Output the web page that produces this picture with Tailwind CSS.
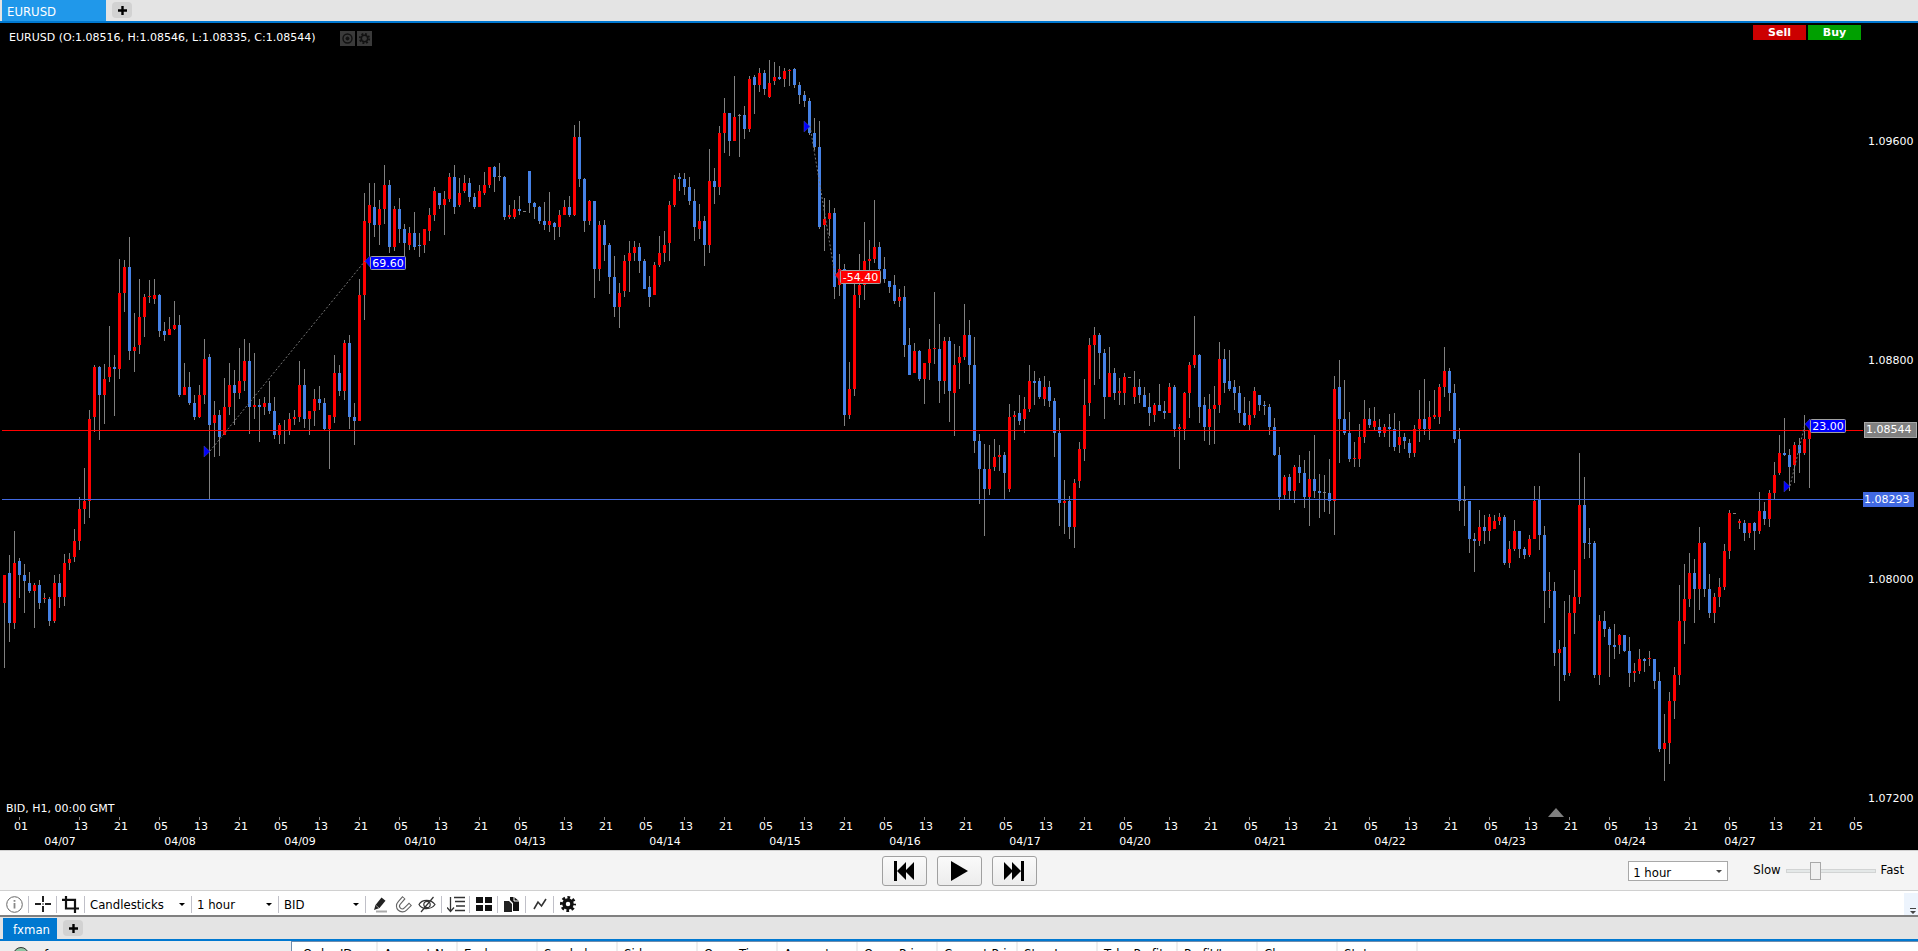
<!DOCTYPE html>
<html lang="en">
<head>
  <meta charset="UTF-8">
  <title>EURUSD</title>
  <script src="https://cdn.jsdelivr.net/npm/@tailwindcss/browser@4"></script>
</head>
<body class="h-screen flex flex-col overflow-hidden bg-white text-black text-[13px] leading-4 font-['DejaVu_Sans_Condensed','DejaVu_Sans',sans-serif]">

  <!-- Chart tabs -->
  <nav class="flex items-start h-[23px] shrink-0 pl-[2px] bg-[#e4e4e4] border-b-2 border-[#0078d0]">
    <a href="#" class="w-[104px] h-[21px] pl-[5px] pt-1 bg-[#2098ea] text-white">EURUSD</a>
    <button aria-label="New chart" class="ml-[6px] mt-[2px] w-5 h-4 rounded bg-[#d2d2d2] flex items-center justify-center">
      <svg width="9" height="9"><path d="M4.500 0v9M0 4.500h9" stroke="#000" stroke-width="2.400"/></svg>
    </button>
  </nav>

  <!-- Chart -->
  <main class="relative flex flex-1 min-h-0 bg-black text-white text-[11px] font-['DejaVu_Sans',sans-serif]">
    <svg id="plot" class="flex-1 min-w-0 h-full"></svg>
    <svg id="scale" class="w-[55px] h-full"></svg>

    <div class="absolute left-[9px] top-[7px] flex items-center">
      <span>EURUSD (O:1.08516, H:1.08546, L:1.08335, C:1.08544)</span>
      <button aria-label="Show" class="ml-6 w-[15px] h-[15px] bg-[#3a3a3a]">
        <svg width="15" height="15" fill="none" stroke="#111"><circle cx="7.500" cy="7.500" r="4.500" stroke-width="1.400"/><circle cx="7.500" cy="7.500" r="1.500" fill="#111"/></svg>
      </button>
      <button aria-label="Settings" class="ml-[2px] w-[15px] h-[15px] bg-[#3a3a3a]">
        <svg width="15" height="15" fill="none" stroke="#111"><circle cx="7.500" cy="7.500" r="3.200" stroke-width="1.500"/><circle cx="7.500" cy="7.500" r="4.700" stroke-width="1.800" stroke-dasharray="1.900 1.790"/></svg>
      </button>
    </div>

    <div class="absolute right-[57px] top-[2px] flex gap-[2px] font-bold">
      <button class="w-[53px] h-[15px] leading-[14px] bg-[#cc0000]">Sell</button>
      <button class="w-[53px] h-[15px] leading-[14px] bg-[#00a000]">Buy</button>
    </div>
  </main>

  <!-- Playback -->
  <section class="flex items-center h-[41px] shrink-0 bg-[#f4f4f4] border-y border-[#d0d0d0] px-[14px]">
    <div class="flex-1"></div>
    <div class="flex gap-[10px]">
      <button aria-label="Back" class="w-[45px] h-[30px] rounded-[3px] border border-[#a0a0a0] bg-linear-to-b from-[#fafafa] to-[#ececec] flex items-center justify-center">
        <svg width="20" height="20"><path d="M0 0h3v20H0zM12 1v18L3 10zM20 1v18L11 10z"/></svg>
      </button>
      <button aria-label="Play" class="w-[45px] h-[30px] rounded-[3px] border border-[#a0a0a0] bg-linear-to-b from-[#fafafa] to-[#ececec] flex items-center justify-center">
        <svg width="17" height="20"><path d="M0 0v20L17 10z"/></svg>
      </button>
      <button aria-label="Forward" class="w-[45px] h-[30px] rounded-[3px] border border-[#a0a0a0] bg-linear-to-b from-[#fafafa] to-[#ececec] flex items-center justify-center">
        <svg width="20" height="20"><path d="M17 0h3v20h-3zM8 1v18l9-9zM0 1v18l9-9z"/></svg>
      </button>
    </div>
    <div class="flex-1 flex items-center justify-end">
      <div class="relative mr-[25px]">
        <select aria-label="Step" class="appearance-none block w-[100px] h-5 pl-1 pt-[3px] border border-[#a8a8a8] bg-white">
          <option>1 hour</option>
        </select>
        <svg class="absolute right-[6px] top-[9px]" width="6" height="3"><path d="M0 0h6L3 3z" fill="#444"/></svg>
      </div>
      <label for="speed" class="-mt-[2px]">Slow</label>
      <input id="speed" type="range" min="0" max="100" value="31" class="appearance-none w-[90px] h-[4px] mx-[5px] bg-[#e4e8e8] border border-[#d2d4d4] [&::-webkit-slider-thumb]:appearance-none [&::-webkit-slider-thumb]:w-[11px] [&::-webkit-slider-thumb]:h-[18px] [&::-webkit-slider-thumb]:bg-[#f0f0f0] [&::-webkit-slider-thumb]:border [&::-webkit-slider-thumb]:border-[#a8a8a8]">
      <label for="speed" class="-mt-[2px]">Fast</label>
    </div>
  </section>

  <!-- Toolbar -->
  <section class="flex items-center h-[26px] shrink-0 pl-px pt-[2px] bg-white border-b-2 border-[#808080]">
    <button aria-label="Info" class="w-7 h-[17px] border-r border-[#c0c0c8] flex items-center justify-center">
      <svg width="17" height="17" fill="none" stroke="#666"><circle cx="8.500" cy="8.500" r="7.800"/><path d="M8.500 7v5.500M8.500 4v1.800" stroke-width="1.800" stroke="#888"/></svg>
    </button>
    <button aria-label="Crosshair" class="w-7 h-[17px] border-r border-[#c0c0c8] flex items-center justify-center">
      <svg width="16" height="16" stroke="#222" stroke-width="2"><path d="M8 0v6M8 10v6M0 8h6M10 8h6"/><path d="M8 7v2" stroke="#999"/></svg>
    </button>
    <button aria-label="Crop" class="w-7 h-[17px] border-r border-[#c0c0c8] flex items-center justify-center">
      <svg width="17" height="17" fill="none" stroke="#111" stroke-width="2.200"><path d="M4 0v12.500h13M0 3.800h13V17"/></svg>
    </button>
    <div class="relative border-r border-[#c0c0c8]">
      <select aria-label="Chart type" class="appearance-none block w-[106px] h-[17px] pl-[5px] leading-[17px]"><option>Candlesticks</option></select>
      <svg class="absolute right-[6px] top-[7px]" width="6" height="3"><path d="M0 0h6L3 3z"/></svg>
    </div>
    <div class="relative border-r border-[#c0c0c8]">
      <select aria-label="Period" class="appearance-none block w-[86px] h-[17px] pl-[5px] leading-[17px]"><option>1 hour</option></select>
      <svg class="absolute right-[6px] top-[7px]" width="6" height="3"><path d="M0 0h6L3 3z"/></svg>
    </div>
    <div class="relative border-r border-[#c0c0c8]">
      <select aria-label="Price side" class="appearance-none block w-[86px] h-[17px] pl-[5px] leading-[17px]"><option>BID</option></select>
      <svg class="absolute right-[6px] top-[7px]" width="6" height="3"><path d="M0 0h6L3 3z"/></svg>
    </div>
    <div class="flex w-[76px] h-[17px] pl-[6px] gap-[6px] items-center border-r border-[#c0c0c8]">
      <button aria-label="Draw"><svg width="17" height="17"><path d="M2 14l1.500-5L9.500 1.500l4 3.300L7.500 12z" fill="#222"/><path d="M4 9.500l3 2.500" stroke="#999"/><path d="M4 15.500h11" stroke="#aaa" stroke-width="2"/></svg></button>
      <button aria-label="Magnet"><svg width="17" height="17" fill="none"><path d="M9 1.500L4.200 7A4.300 4.300 0 0 0 10.500 13L15.500 8" stroke="#666" stroke-width="4.200"/><path d="M8.400 2.200L4.200 7A4.300 4.300 0 0 0 10.500 13L14.800 8.700" stroke="#fff" stroke-width="2"/></svg></button>
      <button aria-label="Hide"><svg width="18" height="17" fill="none" stroke="#333" stroke-width="1.200"><path d="M1 8.500C4 3 13 3 17 8.500 13 14 4 14 1 8.500zM15.500 1L3 16"/><circle cx="9" cy="8.500" r="3.200"/></svg></button>
    </div>
    <button aria-label="Sort" class="w-7 h-[17px] border-r border-[#c0c0c8] flex items-center justify-center">
      <svg width="18" height="17" fill="none" stroke="#333" stroke-width="1.300"><path d="M3.500 1v14M0 11.500l3.500 4 3.500-4M7 1.500h11M8 5.500h10M9 10h9M8 14.500h10"/></svg>
    </button>
    <button aria-label="Tile" class="w-7 h-[17px] border-r border-[#c0c0c8] flex items-center justify-center">
      <svg width="16" height="16"><path d="M0 1h7v6H0zM9 1h7v6H9zM0 9h7v6H0zM9 9h7v6H9z" fill="#111"/></svg>
    </button>
    <button aria-label="Copy" class="w-7 h-[17px] border-r border-[#c0c0c8] flex items-center justify-center">
      <svg width="15" height="17"><path d="M0 5h5l3 3v8H0z" fill="#222"/><path d="M6 1h4l5 4v10h-6V7L6 4z" fill="#111"/><path d="M10 1v4h5" stroke="#fff" fill="none"/></svg>
    </button>
    <button aria-label="Indicators" class="w-7 h-[17px] border-r border-[#c0c0c8] flex items-center justify-center">
      <svg width="14" height="14" fill="none" stroke="#333" stroke-width="1.600"><path d="M1 12L5 5l3.500 4L13 2"/></svg>
    </button>
    <button aria-label="Settings" class="w-7 h-[17px] flex items-center justify-center">
      <svg width="16" height="16" fill="none" stroke="#111"><circle cx="8" cy="8" r="4" stroke-width="3.500"/><circle cx="8" cy="8" r="6.500" stroke-width="3" stroke-dasharray="2.700 2.405" stroke-dashoffset="1.350"/></svg>
    </button>
    <button aria-label="More" class="ml-auto w-[14px] h-full bg-[#edf4fd] flex items-end justify-center pl-[4px] pb-px">
      <svg width="6" height="6"><path d="M0 0h6v1H0zM0 3h6L3 6z" fill="#444"/></svg>
    </button>
  </section>

  <!-- Account tabs -->
  <nav class="flex items-start h-[24px] shrink-0 pl-[3px] pt-px bg-[#e4e4e4] border-b-2 border-[#0078d0]">
    <a href="#" class="w-[54px] h-[21px] pl-[10px] pt-1 bg-[#0078d0] text-white">fxman</a>
    <button aria-label="New account" class="ml-[6px] mt-[2px] w-5 h-4 rounded bg-[#d2d2d2] flex items-center justify-center">
      <svg width="9" height="9"><path d="M4.500 0v9M0 4.500h9" stroke="#000" stroke-width="2.400"/></svg>
    </button>
  </nav>

  <!-- Account panel -->
  <section class="flex h-[10px] shrink-0 overflow-hidden">
    <div class="flex items-start w-[291px] shrink-0 pl-[13px] pt-[6px] gap-[15px] bg-[#eeeeee]">
      <svg width="16" height="16" class="shrink-0"><circle cx="8" cy="8" r="7.500" fill="#8fc7a4" stroke="#333"/></svg>
      <span>fxman</span>
    </div>
    <div class="flex-1 pl-[5px] border-l border-t border-[#6d8cae]">
      <table class="table-fixed w-[1120px] text-left">
        <thead>
          <tr id="columns"></tr>
        </thead>
      </table>
    </div>
  </section>

  <script>
    const RED = "#ff0000", BLUE = "#4682e6", GREY = "#808080";
    const TOP = 23;      // height of the tab bar above the chart
    const STEP = 5;      // distance between two bars
    const FIRST = 4;     // x of the first bar

    // Each run: first bar, base line, then "colour high top bottom low" counted in thirds below the base.
    // R = up, B = down, D = unchanged
    const runs = [
      [0, 220, `R 1065 1065 1149 1343,B 1005 1059 1209 1266,R 933 1029 1209 1227,B 1015 1023 1065 1133,B 1032 1065 1083 1179,
        B 1056 1089 1113 1119,R 1090 1095 1113 1223,B 1080 1095 1149 1167,R 1119 1134 1137 1149,B 1131 1137 1203 1217,
        R 1065 1089 1203 1209,B 1062 1089 1131 1164,R 1002 1029 1131 1158,R 999 1017 1029 1050,R 927 963 1011 1026,
        R 831 867 963 990,R 744 843 867 912,R 570 597 843 894,R 435 441 591 636,B 438 441 525 660,
        R 432 477 525 612,R 318 441 471 486,B 405 441 447 588,R 117 219 447 477,R 120 141 219 276,
        B 51 141 393 420,R 279 381 393 456,R 177 291 375 402,R 222 231 291 351,R 180 228 231 249,
        R 177 225 237 252,B 222 225 333 351,B 306 333 345 363,R 291 327 345 345,R 243 315 327 330,
        B 285 315 525 531,R 429 501 525 525,B 456 501 549 555,B 525 549 591 600,R 495 525 591 594,
        R 357 417 525 552,B 402 411 615 837,R 543 585 609 711,B 570 585 651 708,R 474 561 645 645,
        R 429 495 561 585,B 450 495 519 615,R 384 483 519 537,R 357 423 483 513,B 369 423 561 642,
        R 399 555 561 597,B 537 555 561 666,R 531 549 561 585,B 483 549 573 582,B 531 573 645 657,
        R 609 615 645 672,D 600 630 633 672,R 579 597 630 645,R 570 591 597 615,R 423 495 591 606,
        B 447 495 597 624,R 573 573 597 645,R 507 537 573 618,B 498 537 549 570,B 534 549 627 630,
        R 585 585 627 747,R 405 459 591 609,B 435 459 513 528,R 360 369 513 540,B 345 369 591 627,
        B 549 591 603 675`],
      [71, 110, `R 507 555 933 933,R 249 333 555 630,R 219 285 339 468,B 219 291 345 381,R 270 297 345 405,
        R 165 225 297 342,B 210 225 411 429,R 288 297 411 423,B 264 297 357 399,B 342 357 399 441,
        R 351 369 405 420,B 306 369 411 420,B 369 405 408 441,R 357 357 405 429,R 294 315 363 393,
        R 231 243 315 333,B 249 249 285 297,R 243 267 285 375,R 189 201 267 276,B 165 201 291 312,
        R 204 249 285 291,R 195 219 243 249,B 204 219 261 276,B 249 261 291 297,R 225 243 291 291,
        R 186 225 249 255,R 171 171 225 234,B 168 171 201 246,D 159 198 201 213,B 198 201 321 330,
        R 285 315 321 327,R 270 297 321 327,B 258 297 303 315,D 303 303 306 306,B 183 183 279 309,
        B 276 279 291 327,B 288 291 333 342,B 276 333 345 360,R 246 333 345 366,B 336 339 351 390,
        R 300 315 351 381,R 270 291 315 315,B 258 291 315 321,R 45 81 315 318,B 33 81 207 231,
        B 204 207 333 366,R 270 273 333 345,B 273 273 477 564,R 333 345 477 513,B 330 345 405 453,
        B 399 405 501 552,B 438 501 591 621,R 519 549 591 654,R 435 453 543 561,R 393 429 453 546,
        R 393 411 429 453,B 399 411 453 489,B 447 453 537 537,B 498 531 561 591,R 456 465 555 555,
        R 378 429 465 471,R 363 405 429 456,R 273 285 399 453,R 195 207 285 291,B 189 201 207 243,
        B 189 207 231 255,B 201 231 273 285,B 237 273 351 393,R 282 333 357 387,B 318 333 405 468,
        R 117 213 405 429,B 174 213 231 282`],
      [143, 50, `R 228 249 411 435,R 144 189 249 309,B 189 189 273 318,R 78 201 273 273,D 192 195 198 321,
        B 168 195 237 267,R 78 87 237 246,B 75 81 105 192,R 54 69 105 126,B 60 69 117 135,
        R 30 99 141 144,R 36 81 93 105,B 48 81 87 90,R 54 63 87 111,R 57 60 63 108,
        B 54 57 105 114,B 96 105 135 162,B 123 135 153 171,B 144 153 249 255,B 204 249 291 300,
        B 213 291 531 537,R 444 507 525 603,R 450 489 507 558,B 474 489 711 747,R 612 657 705 738,
        B 642 657 1095 1128,R 936 1017 1095 1107,R 690 735 1017 1038,R 612 705 735 774,R 516 633 705 750,
        R 570 627 633 660,R 450 591 627 639,B 576 591 657 669,B 621 657 687 699,B 693 693 711 729,
        B 675 705 753 762,R 717 741 753 771,B 708 741 885 921,B 834 885 975 975,R 879 903 969 969,
        B 900 903 987 993,R 939 939 987 1062,R 867 897 939 990,R 726 894 897 942,B 822 897 993 1059,
        R 861 873 993 1032,B 861 873 1023 1116,R 882 945 1029 1158,R 888 921 939 1017,R 762 855 921 930,
        B 810 855 945 1002`],
      [194, 270, `B 201 285 513 549,B 492 513 597 702,B 522 597 657 798,R 525 597 657 675,R 507 561 591 603,
        R 525 555 561 603,B 546 555 609 687,R 402 441 657 666,R 423 435 441 510,B 375 429 453 465,
        R 381 417 447 489,R 285 333 417 426,B 303 333 339 405,B 324 333 381 387,R 318 351 387 408,
        B 333 351 393 411,B 384 393 489 561,B 444 489 699 768,R 630 693 699 792,B 678 693 771 807,
        R 627 639 771 834,R 516 537 633 654,R 327 405 537 573,R 204 225 399 438,R 171 195 225 345,
        B 189 195 249 327,B 237 249 381 447,R 231 309 381 381,B 294 309 369 390,R 324 363 369 405,
        R 309 321 369 405,D 321 321 324 324,R 303 351 381 402,B 327 351 375 399,B 351 375 411 411,
        B 369 411 429 468,R 399 405 435 456,B 342 405 423 423,B 393 423 429 447,R 339 351 429 429,
        B 345 351 477 501,R 462 471 477 597,R 366 369 477 510,R 276 285 369 444,R 138 255 285 294,
        B 252 255 411 459,B 381 405 471 513,R 372 417 471 525,R 348 405 417 522,R 216 267 405 429,
        B 237 267 339 369,B 240 333 357 363,B 330 351 369 420,B 348 369 429 459,B 381 429 465 468,
        R 393 435 465 480,R 351 363 435 444,B 375 375 405 423,B 393 405 408 435,B 402 411 471 495,
        B 444 471 555 558`],
      [255, 330, `B 351 375 501 540,R 435 441 495 507,B 432 441 483 507,R 405 411 483 519,B 375 411 429 459,
        B 390 429 501 534,R 363 447 501 588,B 315 447 483 504,B 432 483 489 564,D 435 486 489 546,
        B 387 489 513 552,R 138 177 513 615,B 90 171 267 399,B 150 267 309 315,B 246 309 387 396,
        R 336 384 387 411,R 282 321 387 411,R 210 267 321 339,B 234 267 285 294,R 231 273 291 300,
        B 267 291 309 321,R 282 291 309 321,B 252 291 297 351,B 249 297 351 363,R 273 321 345 369,
        B 309 321 333 357,B 327 339 369 384,R 285 297 369 381,R 180 267 297 336,B 147 267 297 315,
        R 213 261 297 330,R 180 255 261 267,R 162 171 261 282,R 51 123 171 201,B 114 123 189 243,
        B 162 189 327 339,B 294 327 513 543,D 468 510 513 588,B 513 513 627 669,B 609 627 633 726,
        R 540 591 633 648,B 555 591 603 642,R 552 561 603 633,R 555 573 597 597,R 549 561 573 585,
        B 555 561 699 705,R 633 657 699 714,R 570 603 657 663,B 603 603 657 684,B 651 657 675 687,
        R 615 627 675 681,R 468 513 627 627,B 468 510 615 660,B 588 615 783 879,R 726 780 783 834,
        B 756 783 969 1008`],
      [311, 400, `R 720 747 759 903,B 603 741 825 843,R 585 639 819 828,R 510 591 639 702,R 159 315 591 612,
        B 231 315 429 477,B 384 429 432 474,B 423 429 825 834,R 645 663 825 855,B 633 663 687 711,
        B 681 687 735 831,B 672 735 741 777,R 702 705 735 762,B 705 705 753 756,B 711 753 819 861,
        R 789 813 819 846,R 747 777 813 822,B 774 777 783 816,R 753 774 777 798,B 777 777 843 867,
        B 816 843 1047 1056,R 942 1029 1047 1143,R 876 903 1029 1092,R 801 825 903 957,R 555 663 825 855,
        R 492 597 663 732,R 459 519 597 621,B 477 519 567 669,R 381 429 567 630,B 426 429 567 591,
        B 522 567 639 654,R 579 591 639 669,R 534 561 591 621,R 432 453 561 570,R 330 339 453 477,
        D 339 339 342 342,R 357 363 369 387,B 360 369 399 423,R 369 369 399 414,B 366 369 393 450,
        R 276 333 393 402,B 306 333 357 375,R 270 279 357 381,R 186 225 279 297,R 105 159 219 225,
        B 54 159 165 168,B 147 165 201 273,R 126 135 195 249,B 114 135 159 219,R 45 117 159 165,
        R 57 93 117 264`]
    ];

    function rect(x, y, w, h, fill) {
      return `<rect x="${x}" y="${y}" width="${w}" height="${h}" fill="${fill}"/>`;
    }

    function text(x, y, s, anchor = "start") {
      return `<text x="${x}" y="${y}" text-anchor="${anchor}" fill="#fff">${s}</text>`;
    }

    function drawBars() {
      let out = "";
      runs.forEach(([start, base, rows]) => {
        rows.split(",").forEach((row, n) => {
          const [kind, ...levels] = row.trim().split(" ");
          const [high, top, bottom, low] = levels.map(v => base + Math.round(v / 3));
          const x = FIRST + (start + n) * STEP;
          const fill = kind === "R" ? RED : kind === "B" ? BLUE : GREY;
          out += rect(x, high, 1, low - high, GREY);
          out += rect(x - 1, top, 3, Math.max(1, bottom - top), fill);
        });
      });
      return out;
    }

    // Closed trades: entry x/y, exit x/y, result, colour, box width
    const trades = [
      [210, 451, 365, 261, "69.60", "#0000ff", 36],
      [810, 126, 835, 275, "-54.40", "#ff0000", 41],
      [1790, 486, 1805, 424, "23.00", "#0000ff", 36]
    ];

    function drawTrade([x1, y1, x2, y2, label, color, w]) {
      return `<path d="M${x1} ${y1}L${x2} ${y2}" stroke="#777" stroke-dasharray="2 2"/>
        <path d="M${x1 - 6} ${y1 - 5}v11l6 -5.500z" fill="#0000ff" stroke="#4444aa" stroke-width=".5"/>
        <path d="M${x2} ${y2}l5 -5v11z" fill="${color}" stroke="#4444aa" stroke-width=".5"/>
        <rect x="${x2 + 5.5}" y="${y2 - 4.5}" width="${w - 1}" height="13" rx="1" fill="${color}" stroke="#a0a0a0"/>
        ${text(x2 + 5 + w / 2, y2 + 6, label, "middle")}`;
    }

    // Time axis: tick x and number of ticks, hours go 13, 21, 05
    function drawTimeAxis() {
      const hours = ["13", "21", "05"];
      let out = rect(19, 817, 1, 3, GREY) + text(21, 830, "01", "middle");
      [[79, 12], [564, 15], [1169, 15], [1774, 3]].forEach(([start, count]) => {
        for (let n = 0; n < count; n++) {
          const x = start + n * 40;
          out += rect(x, 817, 1, 3, GREY) + text(x + 2, 830, hours[n % 3], "middle");
        }
      });
      const days = { "04/07": 60, "04/08": 180, "04/09": 300, "04/10": 420, "04/13": 530, "04/14": 665, "04/15": 785,
        "04/16": 905, "04/17": 1025, "04/20": 1135, "04/21": 1270, "04/22": 1390, "04/23": 1510, "04/24": 1630, "04/27": 1740 };
      for (const day in days) out += text(days[day], 845, day, "middle");
      return out;
    }

    document.getElementById("plot").innerHTML = `<g transform="translate(0 ${-TOP})">
      ${drawBars()}
      ${rect(2, 430, "100%", 1, RED)}
      ${rect(2, 499, "100%", 1, "#4169e1")}
      ${trades.map(drawTrade).join("")}
      ${text(6, 812, "BID, H1, 00:00 GMT")}
      <path d="M1548 817l8 -9 8 9z" fill="#808080"/>
      ${drawTimeAxis()}
    </g>`;

    document.getElementById("scale").innerHTML = `<g transform="translate(0 ${-TOP})">
      ${text(5, 145, "1.09600")}${text(5, 364, "1.08800")}${text(5, 583, "1.08000")}${text(5, 802, "1.07200")}
      <rect x="1.500" y="422.500" width="52" height="15" fill="#808080" stroke="#a8a8a8"/>${text(3, 433, "1.08544")}
      ${rect(0, 492, 51, 15, "#4169e1")}${text(1, 503, "1.08293")}
    </g>`;

    const columns = ["Order ID", "Account No", "Exchange", "Symbol", "Side", "Open Time", "Amount", "Open Price",
      "Current Price", "Stop Loss", "Take Profit", "Profit/Loss", "Close", "Status"];
    document.getElementById("columns").innerHTML = columns.map(c =>
      `<th class="w-20 h-5 pl-[6px] pt-[3px] font-normal whitespace-nowrap overflow-hidden border-r-2 border-[#eeeeee]">${c}</th>`).join("");
  </script>
</body>
</html>
